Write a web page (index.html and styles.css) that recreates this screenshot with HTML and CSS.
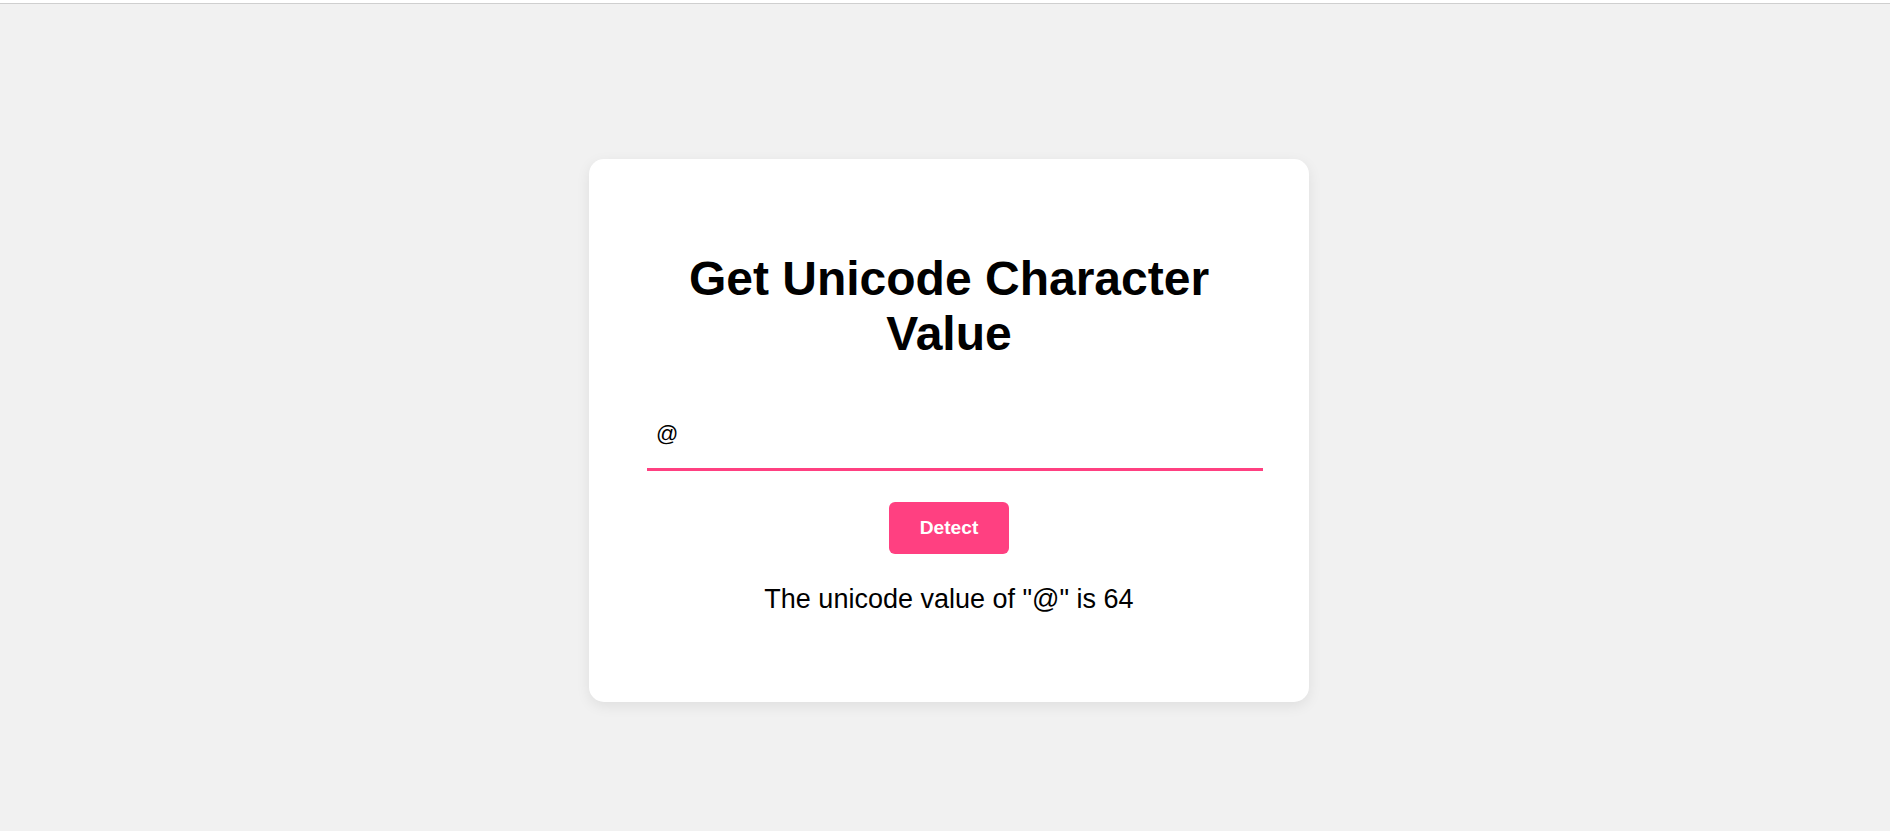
FILE: index.html
```html
<!DOCTYPE html>
<html lang="en">
<head>
<meta charset="utf-8">
<title>Get Unicode Character Value</title>
<link rel="stylesheet" href="styles.css">
</head>
<body>
<div class="topline"></div>
<main class="page">
  <section class="card">
    <h1 class="title">Get Unicode Character Value</h1>
    <input class="char-input" type="text" value="@">
    <button class="detect-btn" type="button">Detect</button>
    <p class="result">The unicode value of "@" is 64</p>
  </section>
</main>
</body>
</html>
```

FILE: styles.css
```css
html, body {
  margin: 0;
  padding: 0;
}

body {
  background: #f1f1f1;
  font-family: "Liberation Sans", Arial, sans-serif;
  color: #000;
  min-height: 831px;
}

.topline {
  height: 3px;
  background: #ffffff;
  border-bottom: 1px solid #cfcfcf;
}

.page {
  display: flex;
  flex-direction: column;
  align-items: center;
  padding: 155px 0 0 8px;
}

.card {
  width: 720px;
  box-sizing: border-box;
  background: #ffffff;
  border-radius: 15px;
  box-shadow: 0 4px 14px rgba(0, 0, 0, 0.08);
  padding: 0 58px 87px;
  display: flex;
  flex-direction: column;
  align-items: center;
}

.title {
  margin: 92px 0 0;
  font-size: 48px;
  line-height: 55px;
  font-weight: bold;
  text-align: center;
  width: 100%;
}

.char-input {
  box-sizing: content-box;
  align-self: flex-start;
  width: 100%;
  margin: 39px 0 0;
  padding: 21px 3px 21px 9px;
  border: none;
  border-bottom: 3px solid #ff4081;
  outline: none;
  font-family: "Liberation Sans", Arial, sans-serif;
  font-size: 22px;
  line-height: 26px;
  color: #000;
  background: transparent;
}

.detect-btn {
  margin-top: 31px;
  width: 120px;
  height: 52px;
  border: none;
  border-radius: 6px;
  background: #ff4081;
  color: #ffffff;
  font-family: "Liberation Sans", Arial, sans-serif;
  font-size: 19.2px;
  font-weight: bold;
  cursor: pointer;
}

.result {
  margin: 30px 0 0;
  font-size: 27px;
  line-height: 31px;
  text-align: center;
}
```
